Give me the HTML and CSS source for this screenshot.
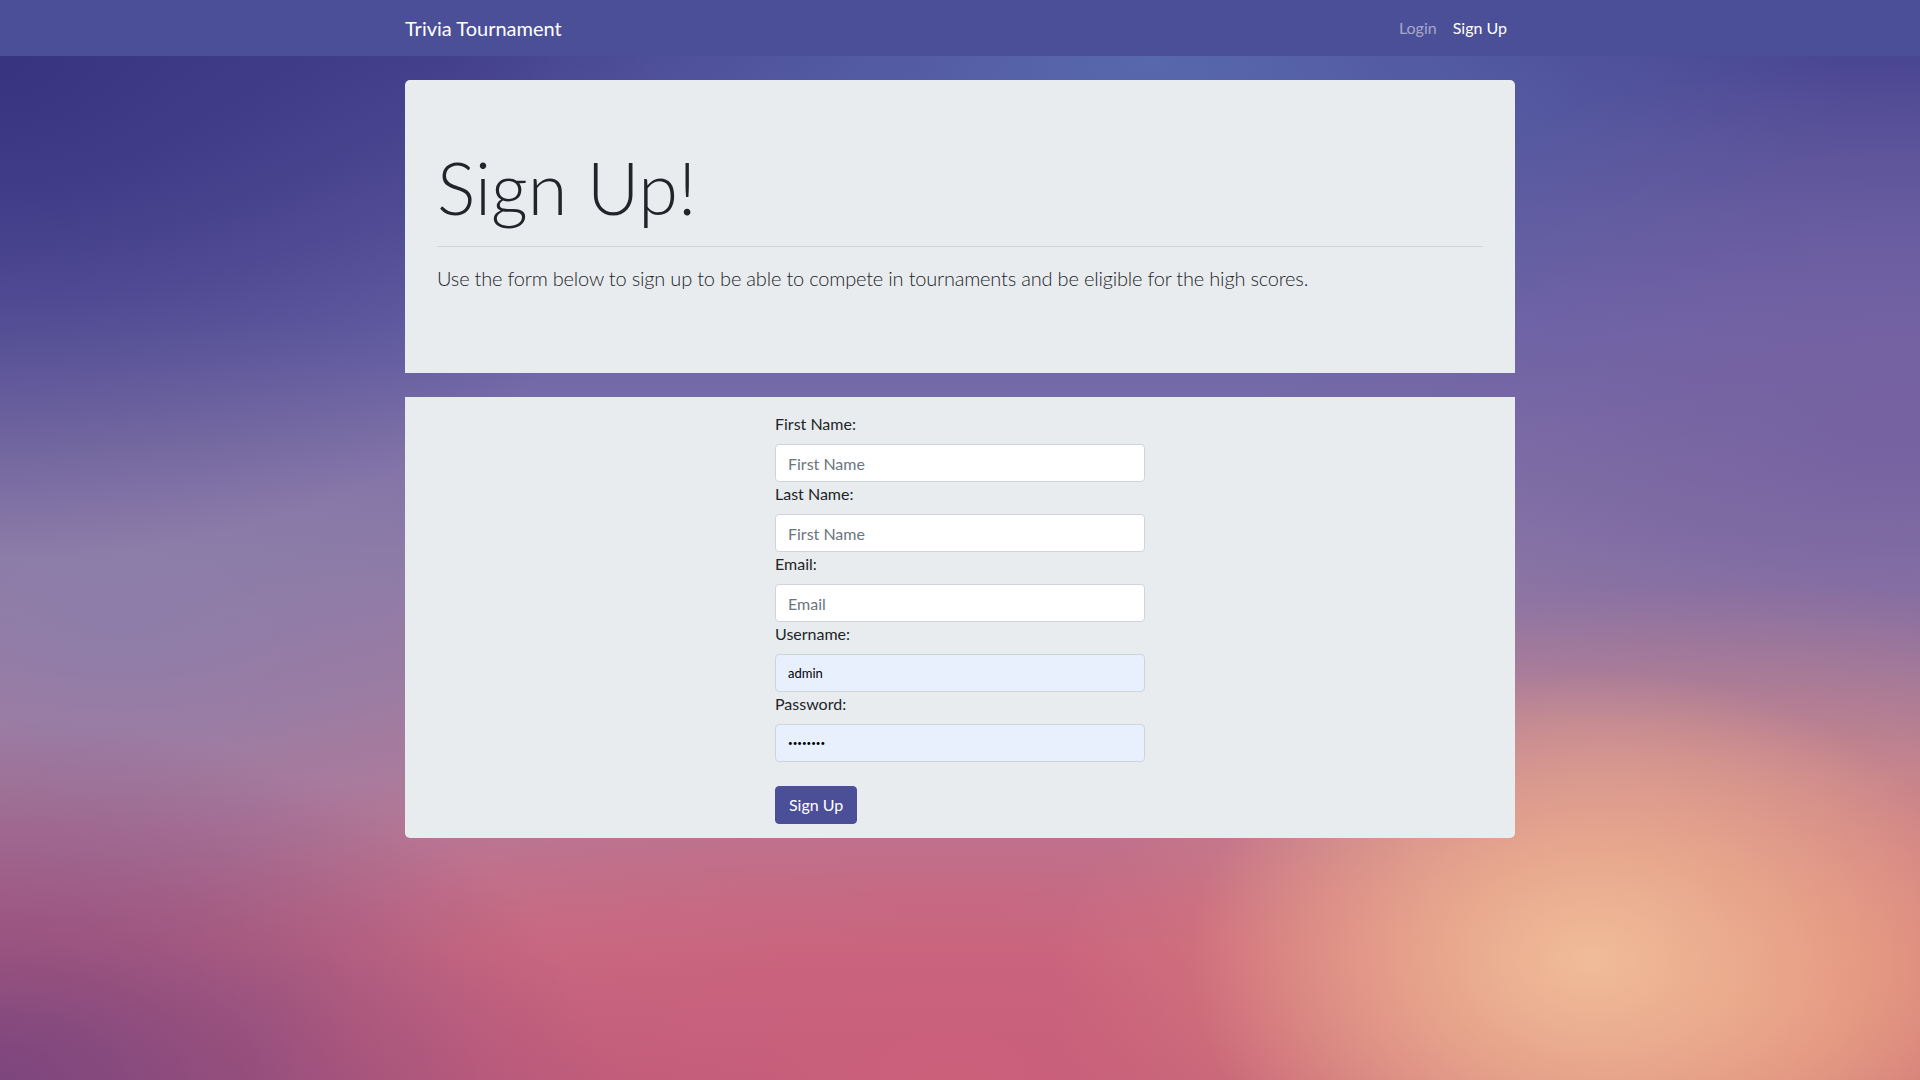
FILE: index.html
```html
<!DOCTYPE html>
<html lang="en">
<head>
<meta charset="utf-8">
<title>Sign Up - Trivia Tournament</title>
<link rel="stylesheet" href="styles.css">
</head>
<body>
<nav class="navbar">
  <div class="container nav-inner">
    <a class="brand" href="#">Trivia Tournament</a>
    <ul class="nav-links">
      <li><a class="nav-link" href="#">Login</a></li>
      <li><a class="nav-link active" href="#">Sign Up</a></li>
    </ul>
  </div>
</nav>
<main class="container">
  <section class="jumbotron">
    <h1 class="display">Sign Up!</h1>
    <hr class="divider">
    <p class="lead">Use the form below to sign up to be able to compete in tournaments and be eligible for the high scores.</p>
  </section>
  <section class="form-panel">
    <form class="signup-form">
      <label class="field-label" for="first">First Name:</label>
      <input class="field" id="first" type="text" placeholder="First Name">
      <label class="field-label" for="last">Last Name:</label>
      <input class="field" id="last" type="text" placeholder="First Name">
      <label class="field-label" for="email">Email:</label>
      <input class="field" id="email" type="email" placeholder="Email">
      <label class="field-label" for="user">Username:</label>
      <input class="field autofilled" id="user" type="text" value="admin">
      <label class="field-label" for="pass">Password:</label>
      <input class="field autofilled secret" id="pass" type="password" value="password">
      <div class="actions">
        <button class="btn-primary" type="submit">Sign Up</button>
      </div>
    </form>
  </section>
</main>
</body>
</html>
```
FILE: styles.css
```css
* { box-sizing: border-box; }
html, body { height: 100%; }
body {
  margin: 0;
  font-family: "Segoe UI", Lato, "Open Sans", sans-serif;
  font-size: 16px;
  line-height: 1.5;
  color: #212529;
  min-height: 1080px;
  background-color: #8a6f9e;
  background-image:
    radial-gradient(ellipse 400px 290px at 1590px 960px, rgba(240,188,152,1) 0%, rgba(236,176,145,0.7) 45%, rgba(236,176,145,0) 100%),
    radial-gradient(ellipse 700px 420px at 1750px 1000px, rgba(232,150,120,0.9) 0%, rgba(232,150,120,0) 100%),
    radial-gradient(ellipse 700px 300px at 950px 1080px, rgba(204,96,122,0.95) 0%, rgba(204,96,122,0) 100%),
    radial-gradient(ellipse 600px 360px at 0px 1080px, rgba(124,70,126,1) 0%, rgba(124,70,126,0) 100%),
    radial-gradient(ellipse 650px 360px at 1900px 420px, rgba(118,96,160,0.9) 0%, rgba(118,96,160,0) 100%),
    radial-gradient(ellipse 700px 320px at 1150px 60px, rgba(88,104,172,1) 0%, rgba(88,104,172,0) 100%),
    radial-gradient(ellipse 700px 500px at 0px 60px, rgba(56,52,128,1) 0%, rgba(56,52,128,0) 100%),
    radial-gradient(ellipse 520px 320px at 120px 620px, rgba(140,126,170,0.85) 0%, rgba(140,126,170,0) 100%),
    linear-gradient(180deg, #433f8c 0%, #6a64a8 30%, #8e7aa6 52%, #b47a98 72%, #c96a82 88%, #b85a7c 100%);
  background-repeat: no-repeat;
}

.container {
  width: 1140px;
  margin: 0 auto;
  padding: 0 15px;
}

/* Navbar */
.navbar {
  background: #4b4f98;
  padding: 8px 0;
}
.nav-inner {
  display: flex;
  align-items: center;
  justify-content: space-between;
}
.brand {
  color: #fff;
  text-decoration: none;
  font-size: 20px;
  line-height: 30px;
  padding: 5px 0;
}
.nav-links {
  list-style: none;
  margin: 0;
  padding: 0;
  display: flex;
}
.nav-link {
  display: block;
  padding: 8px 8px;
  color: rgba(255,255,255,0.5);
  text-decoration: none;
  font-size: 16px;
  line-height: 24px;
}
.nav-link.active { color: #fff; }

/* Jumbotron */
.jumbotron {
  margin-top: 24px;
  background: #e9ecef;
  border-radius: 5px 5px 0 0;
  padding: 64px 32px;
}
.display {
  margin: 0;
  font-size: 72px;
  font-weight: 300;
  line-height: 1.2;
  color: #212529;
}
.divider {
  margin: 16px 0;
  border: 0;
  border-top: 1px solid rgba(0,0,0,0.1);
}
.lead {
  margin: 0 0 16px;
  font-size: 20px;
  font-weight: 300;
  line-height: 1.5;
  letter-spacing: -0.19px;
}

/* Form panel */
.form-panel {
  margin-top: 24px;
  background: #e9ecef;
  border-radius: 0 0 5px 5px;
  padding: 15px 0 14px;
  display: flex;
  justify-content: center;
}
.signup-form {
  width: 370px;
  display: flex;
  flex-direction: column;
}
.field-label {
  display: block;
  margin-bottom: 8px;
  line-height: 24px;
}
.field {
  display: block;
  width: 100%;
  height: 38px;
  padding: 6px 12px;
  font-family: inherit;
  font-size: 16px;
  line-height: 1.5;
  color: #495057;
  background: #fff;
  border: 1px solid #ced4da;
  border-radius: 4px;
  outline: none;
}
.field::placeholder { color: #6c757d; opacity: 1; }
.field.autofilled {
  background: #e8f0fe;
  color: #000;
  font-size: 13px;
}
.field.secret {
  font-size: 8px;
  letter-spacing: 0;
}
.actions { margin-top: 24px; }
.btn-primary {
  font-family: inherit;
  font-size: 16px;
  line-height: 24px;
  padding: 6px 13px;
  color: #fff;
  background: #4b4f98;
  border: 1px solid #4b4f98;
  border-radius: 4px;
  cursor: pointer;
}
```
